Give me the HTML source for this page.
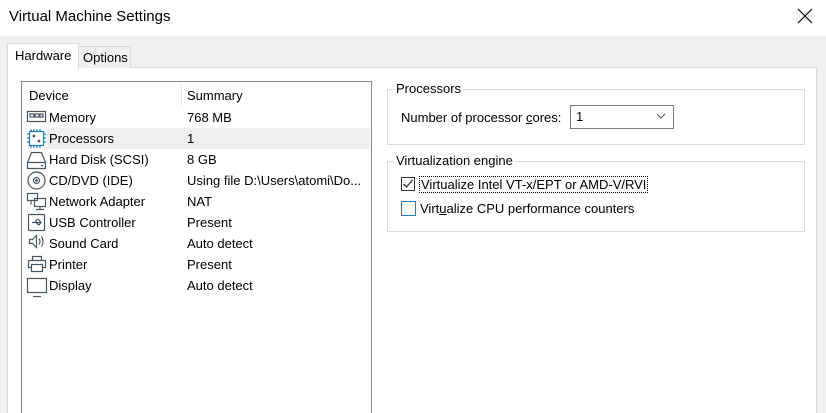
<!DOCTYPE html>
<html><head><meta charset="utf-8"><style>
*{margin:0;padding:0;box-sizing:border-box}
html,body{width:826px;height:413px;overflow:hidden}
body{background:#f0f0f0;font-family:"Liberation Sans",sans-serif;font-size:13px;color:#000;position:relative}
.a{position:absolute}
.t{white-space:nowrap}
</style></head><body>
<div class="a" style="left:0;top:0;width:826px;height:36px;background:#fff"></div>
<div class="a t" style="left:9px;top:8px;font-size:15px">Virtual Machine Settings</div>
<svg class="a" style="left:797px;top:8px" width="16" height="16"><path d="M1 1L15 15M15 1L1 15" stroke="#000" stroke-width="1.2"/></svg>

<div class="a" style="left:7px;top:67px;width:810px;height:360px;background:#fff;border:1px solid #d9d9d9"></div>
<div class="a" style="left:78px;top:46px;width:53px;height:22px;background:#f0f0f0;border:1px solid #d9d9d9;border-bottom:none"></div>
<div class="a t" style="left:83px;top:50px">Options</div>
<div class="a" style="left:7px;top:43px;width:72px;height:26px;background:#fff;border:1px solid #d9d9d9;border-bottom:none"></div>
<div class="a t" style="left:15px;top:48px">Hardware</div>

<div class="a" style="left:21px;top:81px;width:351px;height:340px;border:1px solid #828790;background:#fff"></div>
<div class="a" style="left:181px;top:84px;width:1px;height:22px;background:#e5e5e5"></div>
<div class="a t" style="left:29px;top:88px">Device</div>
<div class="a t" style="left:187px;top:88px">Summary</div>
<div class="a" style="left:47px;top:128px;width:323px;height:21px;background:#efefef"></div>

<div class="a t" style="left:49px;top:107px;line-height:21px">Memory<br>Processors<br>Hard Disk (SCSI)<br>CD/DVD (IDE)<br>Network Adapter<br>USB Controller<br>Sound Card<br>Printer<br>Display</div>
<div class="a t" style="left:187px;top:107px;line-height:21px">768 MB<br>1<br>8 GB<br>Using file D:\Users\atomi\Do...<br>NAT<br>Present<br>Auto detect<br>Present<br>Auto detect</div>

<svg class="a" style="left:26px;top:108px" width="22" height="190" fill="none" stroke="#4a5560" stroke-width="1.2">
<rect x="1.5" y="3.5" width="18" height="10"/><rect x="4" y="6" width="4" height="3"/><rect x="9" y="6" width="4" height="3"/><rect x="14" y="6" width="3" height="3"/>
<rect x="3.5" y="23.5" width="14" height="14" stroke="#1e7ac8"/><path d="M5 21v2M8 21v2M11 21v2M14 21v2M5 38v2M8 38v2M11 38v2M14 38v2M1 26h2M1 30h2M1 34h2M18 26h2M18 30h2M18 34h2" stroke="#1e7ac8"/><circle cx="8" cy="28" r=".8" fill="#333"/><circle cx="13" cy="33" r=".8" fill="#333"/>
<path d="M1.5 60.5v-6l4-10h10l4 10v6z M1.5 54.5h18"/><path d="M15 57.5h2"/>
<circle cx="10.5" cy="72.5" r="8.5"/><circle cx="10.5" cy="72.5" r="3"/><circle cx="10.5" cy="72.5" r=".8"/>
<rect x="1.5" y="85.5" width="10" height="7"/><rect x="8.5" y="90.5" width="11" height="8"/><path d="M14 98.5v3M10 101.5h8M5 92.5v4"/>
<rect x="2.5" y="106.5" width="16" height="16" rx="1"/><path d="M6 114.5h9M13 112l2 2.5-2 2.5M9 114.5l2-3h2M10 114.5l2 2h1"/>
<path d="M3.5 131.5h3l4-4v12l-4-4h-3z M13 130.5q2 3 0 6M15.5 128.5q3 5 0 10"/>
<path d="M6.5 152.5v-4h9v4M2.5 152.5h17v7h-3M5.5 159.5h-3v-7M5.5 156.5h11v7h-11z"/>
<rect x="1.5" y="170.5" width="19" height="14"/><path d="M7 188.5h8"/>
</svg>

<div class="a" style="left:387px;top:89px;width:418px;height:56px;border:1px solid #dcdcdc"></div>
<div class="a t" style="left:394px;top:81px;background:#fff;padding:0 2px">Processors</div>
<div class="a t" style="left:401px;top:110px">Number of processor <u>c</u>ores:</div>
<div class="a" style="left:570px;top:105px;width:104px;height:24px;border:1px solid #7a7a7a;background:#fff"></div>
<div class="a t" style="left:576px;top:109px">1</div>
<svg class="a" style="left:656px;top:113px" width="10" height="7"><path d="M1 1l4 4 4-4" stroke="#555" fill="none"/></svg>

<div class="a" style="left:387px;top:161px;width:418px;height:71px;border:1px solid #dcdcdc"></div>
<div class="a t" style="left:394px;top:153px;background:#fff;padding:0 2px">Virtualization engine</div>
<div class="a" style="left:401px;top:177px;width:14px;height:14px;border:1px solid #333;background:#fff"></div>
<svg class="a" style="left:402px;top:178px" width="12" height="12"><path d="M1.5 6l3 3 6-7" stroke="#333" stroke-width="1.3" fill="none"/></svg>
<div class="a t" style="left:419px;top:176px;border:1px dotted #000;padding:0 1px;line-height:15px">Virtualize Intel VT-x/EPT or AMD-V/RVI</div>
<div class="a" style="left:401px;top:201px;width:15px;height:15px;border:1px solid #1e7ac8;background:#fff"></div>
<div class="a t" style="left:420px;top:201px">Virt<u>u</u>alize CPU performance counters</div>
</body></html>
